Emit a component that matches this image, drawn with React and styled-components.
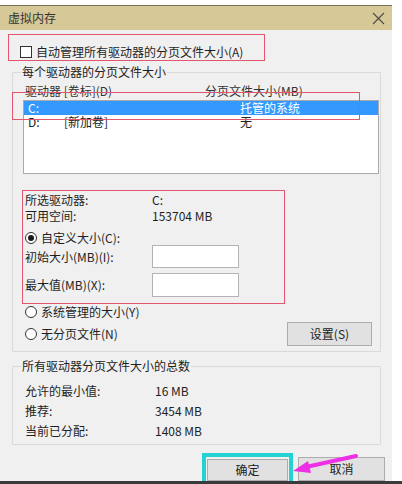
import React from 'react';
import styled, {createGlobalStyle} from 'styled-components';

const GlobalStyle = createGlobalStyle`
    html, body {
        margin: 0;
        padding: 0;
        background: #ffffff;
    }
    * {
        box-sizing: border-box;
    }
`;

const Page = styled.div`
    position: relative;
    width: 402px;
    height: 484px;
    overflow: hidden;
    background: #ffffff;
    display: flex;
    flex-direction: column;
    font-family: "Noto Sans CJK SC", "Noto Sans", sans-serif;
    font-size: 12px;
    color: #1f1f1f;
`;

const Window = styled.div`
    flex: 1;
    width: 392px;
    margin-top: 5px;
    border-top: 1px solid #7a7052;
    background: #f0f0f0;
    display: flex;
    flex-direction: column;
`;

const TitleBar = styled.div`
    height: 24px;
    flex-shrink: 0;
    background: #d6c897;
    display: flex;
    align-items: center;
    justify-content: space-between;
    padding: 0 7px 0 8px;
    color: #333;
    line-height: 14px;
`;

const Body = styled.div`
    display: flex;
    flex-direction: column;
    padding-left: 0;
`;

const Marked = styled.div`
    border: 1px solid ${p => p.$color || '#e2566e'};
`;

const AutoRow = styled(Marked)`
    margin: 4px 0 0 8px;
    width: 257px;
    height: 27px;
    display: flex;
    align-items: center;
    padding: 8px 0 0 11px;
    gap: 4px;
    line-height: 14px;
`;

const CheckBox = styled.span`
    width: 12px;
    height: 12px;
    border: 1px solid #333;
    background: #fff;
`;

const Group = styled.fieldset`
    margin: ${p => p.$top || 0}px 0 0 12px;
    width: 369px;
    min-width: 0;
    padding: 0 0 ${p => p.$bottom || 0}px 0;
    border: 1px solid #d9d9d9;
    border-radius: 1px;

    legend {
        margin-left: 8px;
        padding: 0 1px;
        line-height: 14px;
        color: #222;
    }
`;

const DriveTable = styled.div`
    position: relative;
    margin-top: 5px;
`;

const HeaderRow = styled.div`
    display: grid;
    grid-template-columns: 180px 1fr;
    padding-left: 12px;
    line-height: 14px;
    color: #333;
`;

const ListBox = styled.div`
    margin: 2px 0 0 10px;
    width: 356px;
    height: 74px;
    background: #fff;
    border: 1px solid #a9a9a9;
`;

const DriveRow = styled.div`
    display: grid;
    grid-template-columns: 36px 176px 1fr;
    padding-left: 4px;
    height: 14px;
    line-height: 14px;
    background: ${p => (p.$selected ? '#3399ff' : 'transparent')};
    color: ${p => (p.$selected ? '#ffffff' : '#222')};
`;

const ListMark = styled(Marked)`
    position: absolute;
    left: -1px;
    top: 8px;
    width: 348px;
    height: 28px;
    pointer-events: none;
`;

const DriveDetails = styled(Marked)`
    margin: 16px 0 0 9px;
    width: 263px;
    height: 114px;
    padding: 1px 0 0 2px;
    display: flex;
    flex-direction: column;
`;

const InfoRow = styled.div`
    display: grid;
    grid-template-columns: ${p => p.$label || 127}px 1fr;
    align-items: center;
    height: ${p => p.$h || 16}px;
    margin-top: ${p => p.$mt || 0}px;
    line-height: 14px;
`;

const RadioRow = styled.label`
    display: flex;
    align-items: center;
    gap: 4px;
    height: ${p => p.$h || 15}px;
    margin-top: ${p => p.$mt || 0}px;
    margin-left: ${p => p.$ml || 0}px;
    line-height: 14px;
`;

const Radio = styled.span`
    width: 12px;
    height: 12px;
    border-radius: 50%;
    border: 1px solid #333;
    background: #fff;
    display: flex;
    align-items: center;
    justify-content: center;

    &::after {
        content: '';
        width: 6px;
        height: 6px;
        border-radius: 50%;
        background: ${p => (p.$checked ? '#1a1a1a' : 'transparent')};
    }
`;

const TextBox = styled.div`
    width: 87px;
    height: ${p => p.$h || 23}px;
    background: #fff;
    border: 1px solid #b3b3b3;
`;

const ActionRow = styled.div`
    display: flex;
    align-items: center;
    height: 24px;
    margin: 3px 8px 0 12px;
`;

const Button = styled.div`
    width: ${p => p.$w || 85}px;
    height: ${p => p.$h || 24}px;
    margin-left: ${p => (p.$push ? 'auto' : '0')};
    background: #e1e1e1;
    border: 1px solid #adadad;
    display: flex;
    align-items: center;
    justify-content: center;
    line-height: 14px;
    color: #222;
`;

const TotalRow = styled(InfoRow)`
    padding-left: 12px;
    height: 20px;
`;

const Footer = styled.div`
    display: flex;
    justify-content: flex-end;
    align-items: flex-start;
    gap: 5px;
    margin-top: 8px;
    padding-right: 7px;
`;

const Highlight = styled.div`
    border: 4px solid #24d2d2;
    border-bottom: 0;
    padding: 2px 1px 0;
`;

const BottomBar = styled.div`
    height: 3px;
    flex-shrink: 0;
    background: #3a3a3a;
`;

const Arrow = styled.svg`
    position: absolute;
    left: 290px;
    top: 452px;
    pointer-events: none;
`;

const CloseIcon = () => (
    <svg width="13" height="13" viewBox="0 0 13 13">
        <path d="M1 1 L12 12 M12 1 L1 12" stroke="#4a4a4a" strokeWidth="1.1" fill="none" />
    </svg>
);

const drives = [
    {letter: 'C:', label: '', size: '托管的系统', selected: true},
    {letter: 'D:', label: '[新加卷]', size: '无'},
];

const App = () => {
    return (
        <Page>
            <GlobalStyle />
            <Window>
                <TitleBar>
                    <span>虚拟内存</span>
                    <CloseIcon />
                </TitleBar>

                <Body>
                    <AutoRow>
                        <CheckBox />
                        <span>自动管理所有驱动器的分页文件大小(A)</span>
                    </AutoRow>

                    <Group $top={4} $bottom={5}>
                        <legend>每个驱动器的分页文件大小</legend>

                        <DriveTable>
                            <HeaderRow>
                                <span>驱动器 [卷标](D)</span>
                                <span>分页文件大小(MB)</span>
                            </HeaderRow>
                            <ListBox>
                                {drives.map(d => (
                                    <DriveRow key={d.letter} $selected={d.selected}>
                                        <span>{d.letter}</span>
                                        <span>{d.label}</span>
                                        <span>{d.size}</span>
                                    </DriveRow>
                                ))}
                            </ListBox>
                            <ListMark />
                        </DriveTable>

                        <DriveDetails>
                            <InfoRow>
                                <span>所选驱动器:</span>
                                <span>C:</span>
                            </InfoRow>
                            <InfoRow>
                                <span>可用空间:</span>
                                <span>153704 MB</span>
                            </InfoRow>
                            <RadioRow $mt={6}>
                                <Radio $checked />
                                <span>自定义大小(C):</span>
                            </RadioRow>
                            <InfoRow $h={23}>
                                <span>初始大小(MB)(I):</span>
                                <TextBox />
                            </InfoRow>
                            <InfoRow $h={24} $mt={5}>
                                <span>最大值(MB)(X):</span>
                                <TextBox $h={24} />
                            </InfoRow>
                        </DriveDetails>

                        <RadioRow $h={14} $mt={1} $ml={12}>
                            <Radio />
                            <span>系统管理的大小(Y)</span>
                        </RadioRow>

                        <ActionRow>
                            <RadioRow>
                                <Radio />
                                <span>无分页文件(N)</span>
                            </RadioRow>
                            <Button $push>设置(S)</Button>
                        </ActionRow>
                    </Group>

                    <Group $top={7} $bottom={3}>
                        <legend>所有驱动器分页文件大小的总数</legend>
                        <TotalRow $label={130} style={{marginTop: 8}}>
                            <span>允许的最小值:</span>
                            <span>16 MB</span>
                        </TotalRow>
                        <TotalRow $label={130}>
                            <span>推荐:</span>
                            <span>3454 MB</span>
                        </TotalRow>
                        <TotalRow $label={130}>
                            <span>当前已分配:</span>
                            <span>1408 MB</span>
                        </TotalRow>
                    </Group>

                    <Footer>
                        <Highlight>
                            <Button $w={81} $h={22}>确定</Button>
                        </Highlight>
                        <Button $w={87} $h={24} style={{marginTop: 4}}>取消</Button>
                    </Footer>
                </Body>
            </Window>
            <BottomBar />

            <Arrow width="70" height="26" viewBox="0 0 70 26">
                <path d="M66 4 L16 15" stroke="#ee2fe6" strokeWidth="4" strokeLinecap="round" fill="none" />
                <path d="M3 19 L18 9 L21 21 Z" fill="#ee2fe6" />
            </Arrow>
        </Page>
    );
};

export default App;
